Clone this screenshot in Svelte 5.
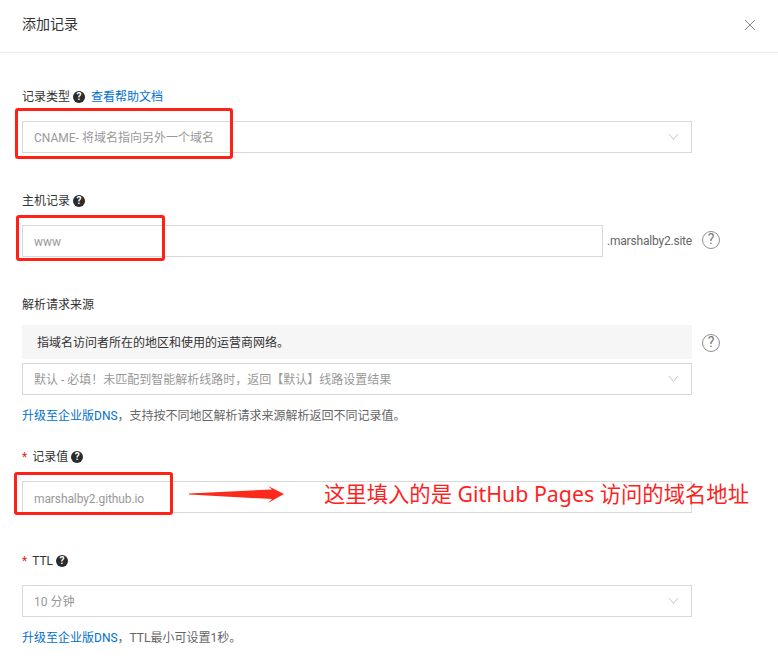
<script>
  const chevron = 'M1 1l4.5 5.5L10 1';
</script>

{#snippet tip()}
  <span class="tip">?</span>
{/snippet}

{#snippet select(text)}
  <div class="box select">
    <span>{text}</span>
    <svg class="chev" width="11" height="8" viewBox="0 0 11 8"><path d={chevron} /></svg>
  </div>
{/snippet}

{#snippet bigHelp()}
  <span class="big-help">?</span>
{/snippet}

<div class="dialog">
  <header>
    <h2>添加记录</h2>
    <svg class="close" width="12" height="12" viewBox="0 0 12 12"><path d="M1 1l10 10M11 1L1 11" /></svg>
  </header>

  <div class="form">
    <div class="label first">记录类型 {@render tip()} <a href="#docs">查看帮助文档</a></div>
    {@render select('CNAME- 将域名指向另外一个域名')}

    <div class="label">主机记录 {@render tip()}</div>
    <div class="row">
      <div class="box host">www</div>
      <span class="suffix">.marshalby2.site</span>
      {@render bigHelp()}
    </div>

    <div class="label plain">解析请求来源</div>
    <div class="row source">
      <div class="banner">指域名访问者所在的地区和使用的运营商网络。</div>
      {@render bigHelp()}
    </div>
    {@render select('默认 - 必填！未匹配到智能解析线路时，返回【默认】线路设置结果')}
    <p class="hint"><a href="#dns">升级至企业版DNS</a>，支持按不同地区解析请求来源解析返回不同记录值。</p>

    <div class="label value"><i>*</i> 记录值 {@render tip()}</div>
    <div class="box value-box">marshalby2.github.io</div>

    <div class="label ttl"><i>*</i> TTL {@render tip()}</div>
    {@render select('10 分钟')}
    <p class="hint"><a href="#dns">升级至企业版DNS</a>，TTL最小可设置1秒。</p>
  </div>

  <!-- screenshot annotations drawn on top of the form -->
  <div class="mark m1"></div>
  <div class="mark m2"></div>
  <div class="mark m3"></div>
  <svg class="arrow" width="97" height="19" viewBox="0 0 97 19">
    <path d="M0 8.4L83 4.5L79 1L95 9L79 18L83 14L0 9.6Z" />
  </svg>
  <div class="note">这里填入的是 GitHub Pages 访问的域名地址</div>
</div>

<style>
  :global(body) { background: #fff; }
  .dialog {
    position: relative; width: 778px; height: 663px; overflow: hidden; background: #fff;
    font-family: Roboto, "Noto Sans CJK SC", sans-serif; font-size: 12px; color: #333;
  }
  header {
    height: 52px; border-bottom: 1px solid #e8edf0;
    display: flex; align-items: center; justify-content: space-between;
    padding: 0 22px;
  }
  h2 { margin: 0 0 4px; font-size: 14px; font-weight: 400; color: #333; line-height: 18px; }
  .close { margin-bottom: 2px; }
  .close path { fill: none; stroke: #888; stroke-width: 1; }

  .form { padding-left: 22px; }
  .label { display: flex; align-items: center; gap: 3px; height: 18px; line-height: 18px; margin: 39px 0 15px; }
  .label.first { margin-top: 35px; }
  .label.plain { margin-bottom: 11px; }
  .label.value { margin: 23px 0 15px; }
  .label.ttl { margin: 39px 0 15px; }
  .label a { margin-left: 3px; }
  .label i { color: #e2231a; font-style: normal; margin-right: 2px; }
  a { color: #0070cc; text-decoration: none; }

  .tip {
    width: 12px; height: 12px; border-radius: 50%; background: #2b2b2b; color: #fff;
    font-size: 10px; font-weight: 700; line-height: 12px; text-align: center; display: inline-block;
  }
  .box {
    box-sizing: border-box; height: 32px; border: 1px solid #d7d8d9; padding: 0 11px;
    display: flex; align-items: center; color: #999; width: 670px; background: #fff;
  }
  .select { justify-content: space-between; padding-right: 12px; padding-bottom: 2px; }
  .chev { margin-top: 2px; }
  .chev path { fill: none; stroke: #c6c6c6; stroke-width: 1; }
  .row { display: flex; align-items: center; }
  .host { width: 581px; padding-top: 2px; }
  .value-box { padding-top: 3px; letter-spacing: -0.1px; }
  .suffix { margin-left: 4px; color: #666; width: 85px; white-space: nowrap; letter-spacing: -0.2px; }
  .big-help {
    box-sizing: border-box; width: 18px; height: 18px; margin-left: 10px; border: 1.5px solid #909090; border-radius: 50%;
    color: #777; font-size: 14px; line-height: 15px; text-align: center;
  }
  .host ~ .big-help { margin-bottom: 3px; }
  .source .big-help { margin-top: 2px; }
  .source { margin-bottom: 4px; }
  .banner {
    box-sizing: border-box; width: 670px; height: 34px; background: #f6f6f6; padding: 1px 0 0 15px;
    line-height: 34px; color: #333;
  }
  .hint { margin: 12px 0 0; padding-top: 1px; line-height: 17px; color: #666; }

  .mark { position: absolute; box-sizing: border-box; border: 3px solid #ff2116; border-radius: 3px; }
  .m1 { left: 15px; top: 108px; width: 218px; height: 51px; }
  .m2 { left: 16px; top: 215px; width: 149px; height: 46px; }
  .m3 { left: 14px; top: 472px; width: 159px; height: 43px; }
  .arrow { position: absolute; left: 189px; top: 485px; }
  .arrow path { fill: #fb2a1c; }
  .note {
    position: absolute; left: 324px; top: 480px; line-height: 28px; color: #ff1f1f;
    font-family: "Noto Sans", "Noto Sans CJK SC", sans-serif; font-size: 21.33px; white-space: nowrap;
  }
</style>
